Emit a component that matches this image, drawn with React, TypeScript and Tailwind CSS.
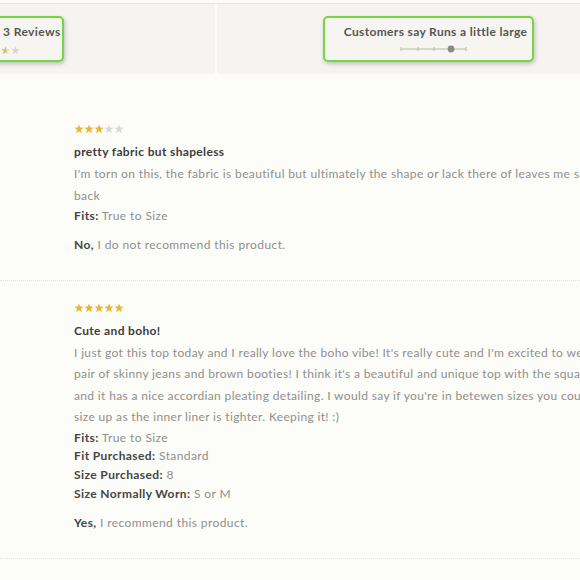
import type { ReactNode } from 'react';

type Review = {
  id: string;
  rating: number;
  title: string;
  lines: string[];
  details: Array<{ label: string; value: string }>;
  recommend: boolean;
};

const reviews: Review[] = [
  {
    id: 'r1',
    rating: 3,
    title: 'pretty fabric but shapeless',
    lines: [
      "I'm torn on this, the fabric is beautiful but ultimately the shape or lack there of leaves me sad to send it",
      'back',
    ],
    details: [{ label: 'Fits', value: 'True to Size' }],
    recommend: false,
  },
  {
    id: 'r2',
    rating: 5,
    title: 'Cute and boho!',
    lines: [
      "I just got this top today and I really love the boho vibe! It's really cute and I'm excited to wear it with a",
      "pair of skinny jeans and brown booties! I think it's a beautiful and unique top with the square neckline",
      "and it has a nice accordian pleating detailing. I would say if you're in betewen sizes you could",
      'size up as the inner liner is tighter. Keeping it! :)',
    ],
    details: [
      { label: 'Fits', value: 'True to Size' },
      { label: 'Fit Purchased', value: 'Standard' },
      { label: 'Size Purchased', value: '8' },
      { label: 'Size Normally Worn', value: 'S or M' },
    ],
    recommend: true,
  },
];

const STAR = 'M5 0.4 L6.2 3.6 L9.6 3.7 L6.9 5.8 L7.9 9.2 L5 7.2 L2.1 9.2 L3.1 5.8 L0.4 3.7 L3.8 3.6 Z';

function Star({ fill, size = 10, half = false, id }: { fill: string; size?: number; half?: boolean; id?: string }) {
  return (
    <svg width={size} height={size} viewBox="0 0 10 10" className="block">
      {half && id ? (
        <>
          <defs>
            <linearGradient id={id} x1="0" x2="1" y1="0" y2="0">
              <stop offset="0.55" stopColor="#e8b93a" />
              <stop offset="0.55" stopColor="#d6d6d3" />
            </linearGradient>
          </defs>
          <path d={STAR} fill={`url(#${id})`} />
        </>
      ) : (
        <path d={STAR} fill={fill} />
      )}
    </svg>
  );
}

function Stars({ rating }: { rating: number }) {
  return (
    <div className="flex h-[10px] items-center">
      {[1, 2, 3, 4, 5].map((n) => (
        <Star key={n} fill={n <= rating ? '#eab532' : '#d9d9d6'} />
      ))}
    </div>
  );
}

function Callout({ children, className }: { children: ReactNode; className?: string }) {
  return (
    <div
      className={`h-[46px] rounded-[5px] border-2 border-[#74d640] bg-[#f6f5f1] shadow-[1px_2px_4px_rgba(0,0,0,0.22)] ${className ?? ''}`}
    >
      {children}
    </div>
  );
}

function FitScale() {
  return (
    <svg width="70" height="8" viewBox="0 0 70 8" className="block">
      <line x1="1" y1="4" x2="66" y2="4" stroke="#b9b8b4" strokeWidth="1" />
      {[1, 18, 34, 66].map((x) => (
        <line key={x} x1={x} y1="2" x2={x} y2="6" stroke="#b9b8b4" strokeWidth="1" />
      ))}
      <circle cx="51" cy="4" r="3.4" fill="#8a8a88" />
    </svg>
  );
}

function ReviewItem({ review }: { review: Review }) {
  return (
    <div className="border-b border-dotted border-[#e4e3df] pl-[74px] pb-[25px]">
      <Stars rating={review.rating} />
      <h3 className="mt-[9px] text-[12px] leading-[18px] font-bold tracking-[0.35px] text-[#3d3d3d]">
        {review.title}
      </h3>
      <div className="mt-[2px] text-[12px] leading-[21.5px] tracking-[0.35px] whitespace-nowrap text-[#8f8f8d]">
        {review.lines.map((line, i) => (
          <p key={i}>{line}</p>
        ))}
      </div>
      <div className="mt-[1px] text-[12px] leading-[18.7px] tracking-[0.4px] text-[#8f8f8d]">
        {review.details.map((d) => (
          <p key={d.label}>
            <span className="font-bold text-[#454545]">{d.label}:</span> {d.value}
          </p>
        ))}
      </div>
      <p className="mt-[9px] text-[12px] leading-[20px] tracking-[0.4px] text-[#8f8f8d]">
        <span className="font-bold text-[#454545]">{review.recommend ? 'Yes,' : 'No,'}</span>{' '}
        {review.recommend ? 'I recommend this product.' : 'I do not recommend this product.'}
      </p>
    </div>
  );
}

export default function App() {
  return (
    <div
      className="h-[580px] w-[580px] overflow-hidden bg-[#fcfcf9]"
      style={{ fontFamily: 'Lato, "Open Sans", sans-serif' }}
    >
      <div className="h-[4px] border-b border-[#e7e6e1] bg-[#fbfbf8]" />
      <div className="flex h-[70px] bg-[#f5f4f0]">
        <div className="w-[215px] shrink-0 pt-[12px]">
          <Callout className="-ml-[40px] w-[104px] pt-[5px] pl-[41px]">
            <p className="text-[12px] leading-[18px] font-bold tracking-[0.4px] whitespace-nowrap text-[#555]">
              3 Reviews
            </p>
            <div className="mt-[5px] -ml-[32px] flex gap-[1px]">
              <Star fill="#e8b93a" size={9} />
              <Star fill="#e8b93a" size={9} />
              <Star fill="#e8b93a" size={9} />
              <Star fill="#e8b93a" size={9} half id="halfstar" />
              <Star fill="#d6d6d3" size={9} />
            </div>
          </Callout>
        </div>
        <div className="w-[2px] shrink-0 bg-[#fbfbf9]" />
        <div className="flex-1 pt-[12px]">
          <Callout className="ml-[106px] flex w-[211px] flex-col items-center pt-[5px] pl-[14px]">
            <p className="text-[12px] leading-[18px] font-bold tracking-[0.35px] whitespace-nowrap text-[#555]">
              Customers say Runs a little large
            </p>
            <div className="mt-[4px] -ml-[2px]">
              <FitScale />
            </div>
          </Callout>
        </div>
      </div>
      <div className="pt-[50px]">
        {reviews.map((r, i) => (
          <div key={r.id} className={i > 0 ? 'pt-[22px]' : ''}>
            <ReviewItem review={r} />
          </div>
        ))}
      </div>
    </div>
  );
}
